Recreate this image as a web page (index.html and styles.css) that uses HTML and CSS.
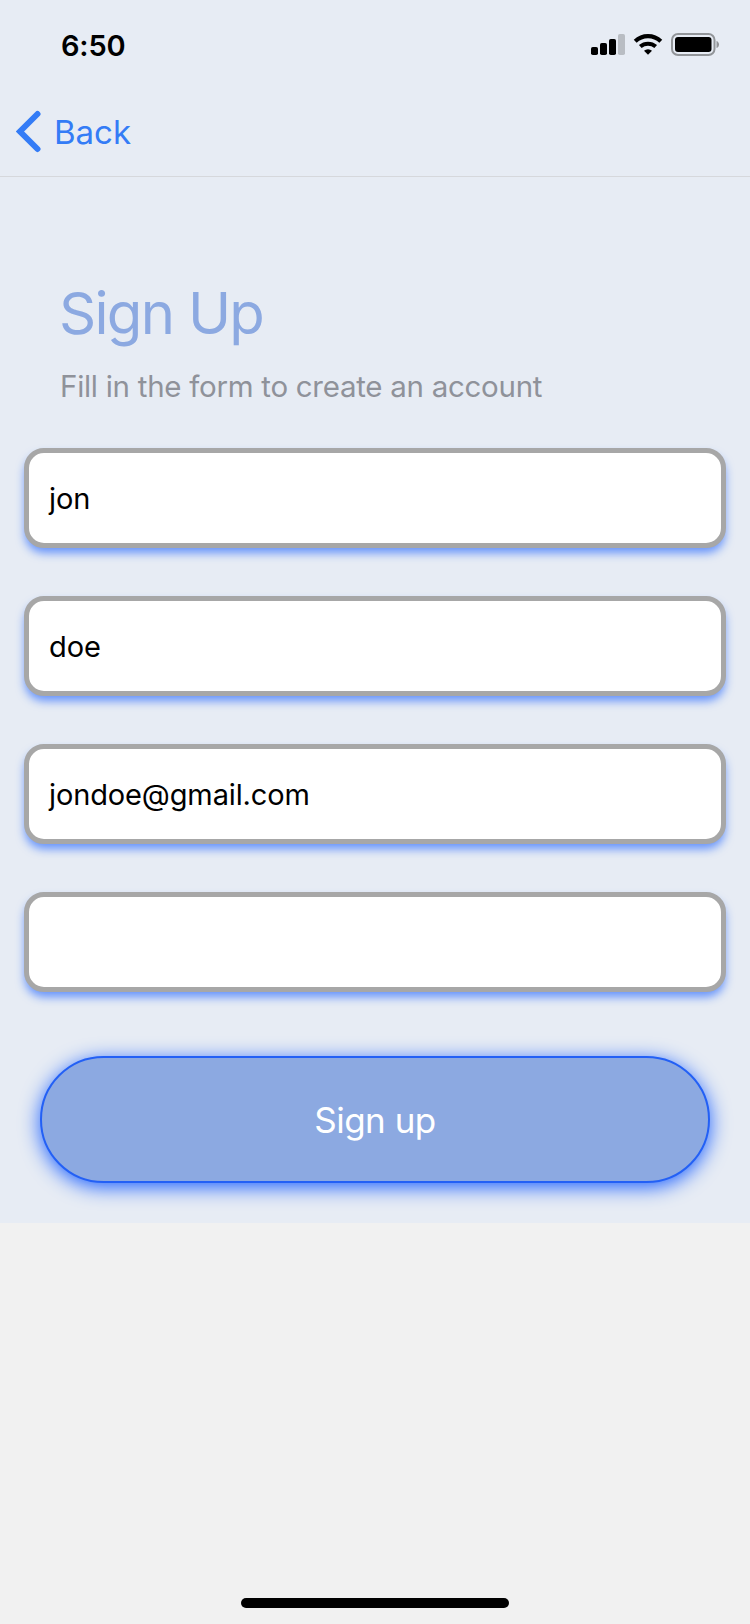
FILE: index.html
```html
<!DOCTYPE html>
<html lang="en">
<head>
<meta charset="utf-8">
<title>Sign Up</title>
<link rel="stylesheet" href="styles.css">
</head>
<body>
<div class="screen">
  <div class="panel">
    <header class="status">
      <span class="time">6:50</span>
      <svg class="indicators" width="132" height="26" viewBox="0 0 132 26">
        <rect x="1" y="15" width="7" height="8" rx="1.8"/>
        <rect x="10" y="11" width="7" height="12" rx="1.8"/>
        <rect x="19" y="7" width="7" height="16" rx="1.8"/>
        <rect x="28" y="2" width="7" height="21" rx="1.8" fill="#b9bdc3"/>
        <path d="M58 22.800l-4-4a6 6 0 0 1 8 0z"/>
        <path d="M50.300 14.600a11.500 11.500 0 0 1 15.400 0" fill="none" stroke="#000" stroke-width="4"/>
        <path d="M45.200 9.200a18.600 18.600 0 0 1 25.600 0" fill="none" stroke="#000" stroke-width="4.200"/>
        <rect x="82" y="2" width="42.500" height="21" rx="6" fill="none" stroke="#929599" stroke-width="2"/>
        <rect x="85" y="5" width="36.500" height="15" rx="3"/>
        <path d="M126.500 9c3.400 1 3.400 6 0 7z" fill="#929599"/>
      </svg>
    </header>
    <nav class="nav">
      <svg class="chevron" width="26" height="44" viewBox="0 0 26 44"><path d="M21.500 4L4 21.500 21.500 39" fill="none" stroke="#347cf6" stroke-width="6" stroke-linecap="round" stroke-linejoin="miter"/></svg>
      <span class="back">Back</span>
    </nav>
    <main class="form">
      <h1 class="title">Sign Up</h1>
      <p class="subtitle">Fill in the form to create an account</p>
      <div class="fields">
        <div class="field"><span>jon</span></div>
        <div class="field"><span>doe</span></div>
        <div class="field"><span>jondoe@gmail.com</span></div>
        <div class="field"></div>
      </div>
      <div class="submit"><span>Sign up</span></div>
    </main>
  </div>
  <footer class="footer"><div class="home"></div></footer>
</div>
</body>
</html>
```
FILE: styles.css
```css
* { box-sizing: border-box; }
body { margin: 0; font-family: Inter, "Liberation Sans", sans-serif; }
.screen { width: 750px; height: 1624px; background: #f1f1f1; display: flex; flex-direction: column; }
.panel { height: 1223px; background: #e7ecf4; }
.status { height: 88px; padding: 32px 28px 0 61px; display: flex; justify-content: space-between; }
.time { font-size: 29px; line-height: 27px; font-weight: 600; letter-spacing: -0.2px; }
.indicators { display: block; }
.nav { height: 89px; padding: 22px 0 0 16px; display: flex; gap: 12px; border-bottom: 1px solid #d6d8dc; }
.back { font-size: 33px; line-height: 44px; color: #347cf6; }
.form { display: flex; flex-direction: column; padding: 106px 24px 0; }
.title { margin: 0 35px; font-size: 58px; line-height: 60px; font-weight: 400; letter-spacing: -1.700px; color: #8ca9e1; }
.subtitle { margin: 26px 36px 0; font-size: 29.500px; line-height: 34px; letter-spacing: -0.280px; color: #8f929a; white-space: nowrap; }
.fields { display: grid; gap: 48px; margin-top: 45px; }
.field { height: 100px; border: 5px solid #a7a7a7; border-radius: 20px; background: #fff; padding: 0 20px; display: flex; align-items: center; font-size: 29px; letter-spacing: -0.130px; color: #000; box-shadow: 0 6px 10px -1px #1f62ffa6; }
.submit { margin: 64px 16px 0; height: 127px; border: 2px solid #2360f5; border-radius: 64px; background: #8ca9e1; color: #fff; font-size: 35px; letter-spacing: -0.500px; padding-top: 1px; display: flex; align-items: center; justify-content: center; box-shadow: 0 4px 20px #1f62ff; }
.footer { flex: 1; display: flex; justify-content: center; align-items: flex-end; padding-bottom: 16px; }
.home { width: 268px; height: 10px; border-radius: 5px; background: #000; }
```
